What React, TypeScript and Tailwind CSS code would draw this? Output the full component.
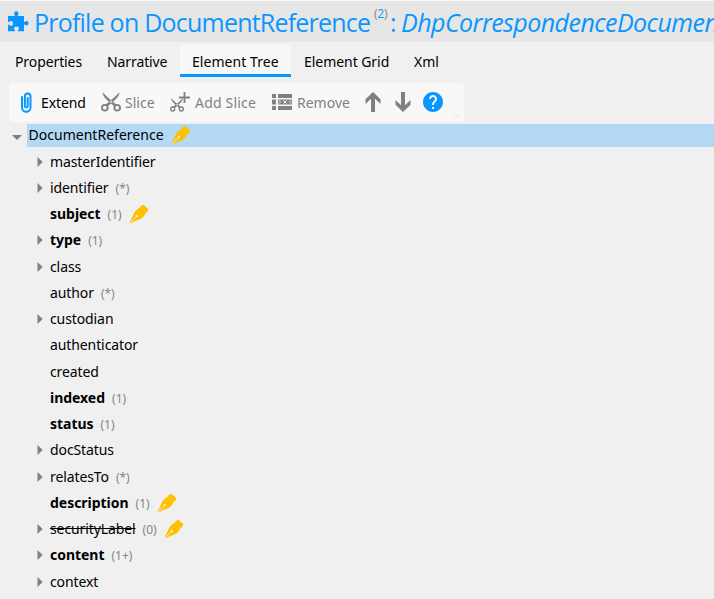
import React from "react";
import { MdHelp } from "react-icons/md";

type Node = {
  name: string;
  card?: string;
  bold?: boolean;
  struck?: boolean;
  arrow?: boolean;
  pen?: boolean;
};

const nodes: Node[] = [
  { name: "masterIdentifier", arrow: true },
  { name: "identifier", card: "(*)", arrow: true },
  { name: "subject", card: "(1)", bold: true, pen: true },
  { name: "type", card: "(1)", bold: true, arrow: true },
  { name: "class", arrow: true },
  { name: "author", card: "(*)" },
  { name: "custodian", arrow: true },
  { name: "authenticator" },
  { name: "created" },
  { name: "indexed", card: "(1)", bold: true },
  { name: "status", card: "(1)", bold: true },
  { name: "docStatus", arrow: true },
  { name: "relatesTo", card: "(*)", arrow: true },
  { name: "description", card: "(1)", bold: true, pen: true },
  { name: "securityLabel", card: "(0)", struck: true, arrow: true, pen: true },
  { name: "content", card: "(1+)", bold: true, arrow: true },
  { name: "context", arrow: true },
];

function Puzzle() {
  return (
    <svg className="h-[21px] w-[21px] shrink-0" viewBox="0 0 21 21" fill="#0a96ff">
      <path d="M0 5h6.800V4.200C6.200 3.600 6.200 2.900 6.200 2.300 6.200 1 7.100.3 8.300.3s2.200.7 2.200 2c0 .7-.1 1.300-.7 1.900V5H16v6h.8c.5-.7 1.100-1 1.800-1 1.200 0 1.900 1 1.900 2.200s-.7 2.300-1.900 2.300c-.7 0-1.300-.4-1.800-1H16V20.300H10v-1.200c.7-.5 1-1.100 1-1.700 0-1.200-1.100-1.900-2.500-1.900S6 16.200 6 17.400c0 .7.3 1.200 1 1.700v1.200H0v-6.500h1.200c.5.8 1.100 1.100 1.800 1.100 1.300 0 2-1.100 2-2.500S4.300 9.900 3 9.900c-.7 0-1.300.3-1.800 1H0Z" />
    </svg>
  );
}

function Clip() {
  return (
    <svg className="-mt-px h-[21px] w-[11px] shrink-0" viewBox="0 0 11 21" fill="none" stroke="#0a96ff" strokeWidth="2" strokeLinecap="round">
      <path d="M1 5v10.500a4.250 4.250 0 0 0 8.500 0V4.200a2.800 2.800 0 0 0-5.600 0v9.800a1.400 1.400 0 0 0 2.800 0V6" />
    </svg>
  );
}

function Scissors({ className }: { className: string }) {
  return (
    <svg className={className} viewBox="0 0 21 20" fill="none" stroke="#808080" strokeWidth="2">
      <circle cx="4" cy="16" r="3" />
      <circle cx="17" cy="16" r="3" />
      <path d="M2 .2C2.200 3.200 4 5.700 9.300 10.200l5.100 4.600 1.600-2C12 9.400 6 5 2 .2ZM19 .2c-.2 3-2 5.500-7.300 10l-5.100 4.600L5 12.800C9 9.400 15 5 19 .2Z" fill="#808080" stroke="#808080" strokeWidth=".5" />
    </svg>
  );
}

function AddSlice() {
  return (
    <div className="relative -mt-px h-5 w-5 shrink-0">
      <Scissors className="absolute top-[6px] left-0 h-[14px] w-[14px]" />
      <svg className="absolute top-0 left-[9px] h-[11px] w-[11px]" viewBox="0 0 11 11" stroke="#808080" strokeWidth="1.800">
        <path d="M5.500 0v11M0 5.500h11" />
      </svg>
    </div>
  );
}

function RemoveRows() {
  return (
    <svg className="-mt-px h-4 w-5 shrink-0" viewBox="0 0 20 16" fill="#808080">
      <path d="M0 0h4v4H0zM6 0h14v4H6zM0 5.500h4v5H0zM6 5.500h14v5H6zM0 12h4v4H0zM6 12h14v4H6z" />
      <path d="m7 6.500 1.500 1.500L7 9.500M11.500 6.500l3 3m0-3-3 3M19 6.500 17.500 8l1.500 1.500" fill="none" stroke="#f8f8f8" strokeWidth="1" />
    </svg>
  );
}

function Arrow({ down = false }: { down?: boolean }) {
  return (
    <svg className={down ? "h-5 w-4 shrink-0 rotate-180" : "h-5 w-4 shrink-0"} viewBox="0 0 16 20" fill="#808080">
      <path d="M8 0l7.500 7.200v4.800L10 6.700V20H6V6.700L.5 12V7.200Z" />
    </svg>
  );
}

function Pen() {
  return (
    <svg className="h-5 w-5 shrink-0" viewBox="0 0 20 20">
      <path d="M10.800 2.700 14.400.8 19.400 5.200 17.400 9.200Z" fill="#ffc000" />
      <path d="M11.600 3.200 16.700 8.300C15.500 12.600 12.400 15.600 7.600 16.400L1.300 19.300.6 18.600 3.400 12.700C4.700 8.300 7.400 5.100 11.600 3.200Z" fill="#ffc000" />
      <path d="M1 18.900 7.300 12.600" stroke="#f4eedc" strokeWidth=".9" />
      <circle cx="7.800" cy="12" r="1.200" fill="#f4eedc" />
    </svg>
  );
}

function TreeRow({ node }: { node: Node }) {
  return (
    <div className="flex h-[26.250px] items-center pl-[37px]">
      <div className="w-[13px] shrink-0">
        {node.arrow && (
          <svg className="h-[10px] w-[6px]" viewBox="0 0 6 10">
            <path d="M.5 0 5.700 5 .5 10Z" fill="#808080" />
          </svg>
        )}
      </div>
      <span className={`${node.bold ? "font-bold tracking-[-0.030px]" : "tracking-[-0.1px]"} ${node.struck ? "line-through" : ""}`}>{node.name}</span>
      {node.card && <span className="ml-[7px] pt-[2px] text-[12px] text-[#858585]">{node.card}</span>}
      {node.pen && <span className="ml-[7px]"><Pen /></span>}
    </div>
  );
}

export default function App() {
  return (
    <div className="h-[599px] w-[714px] overflow-hidden bg-[#f0f0f0] font-['Noto_Sans','Open_Sans',sans-serif] text-[14px] leading-5 text-black">
      <header className="flex h-[42px] items-center border-t border-[#f8f8f8] bg-[#e6e6e6] pl-2 whitespace-nowrap text-[#0a96ff]">
        <Puzzle />
        <h1 className="ml-[5px] flex items-center font-['Open_Sans',sans-serif] text-[25px] leading-8">
          <span className="w-[337px] tracking-[-0.780px]">Profile on DocumentReference</span>
          <span className="mb-[16px] ml-[3px] w-[16px] text-[12px] leading-4 tracking-[-0.2px]"><span className="text-[#858585]">(</span>2<span className="text-[#858585]">)</span></span>
          <span className="w-[11px]">:</span>
          <span className="tracking-[-0.550px] italic">DhpCorrespondenceDocumen</span>
        </h1>
      </header>
      <nav className="mt-[2px] flex h-[33px] text-[14px]">
        <div className="w-[107px] pt-2 pl-[15px] tracking-[-0.1px]">Properties</div>
        <div className="w-[73px] pt-2 tracking-[-0.1px]">Narrative</div>
        <div className="w-[111px] rounded-t-[6px] border-b-[3px] border-[#0a96ff] bg-[#f8f8f8] pt-2 pl-3 tracking-[0.050px]">Element Tree</div>
        <div className="w-[123px] pt-2 pl-[13px] tracking-[-0.050px]">Element Grid</div>
        <div className="pt-2">Xml</div>
      </nav>
      <div className="mt-[6px] ml-[9px] flex h-[39px] w-[455px] items-center rounded-[4px] bg-[#f8f8f8] pl-3 whitespace-nowrap text-[#808080]">
        <div className="flex w-[80px] items-center gap-[9px] text-black"><Clip /><span className="tracking-[-0.1px]">Extend</span></div>
        <div className="flex w-[69px] items-center gap-[4px]"><Scissors className="-mt-px h-5 w-5 shrink-0" /><span>Slice</span></div>
        <div className="flex w-[102px] items-center gap-[5px]"><AddSlice /><span className="tracking-[0.2px]">Add Slice</span></div>
        <div className="flex w-[93px] items-center gap-[5px]"><RemoveRows /><span>Remove</span></div>
        <span className="-mt-px flex"><Arrow /></span>
        <span className="-mt-px ml-[14px] flex"><Arrow down /></span>
        <MdHelp className="-mt-px ml-[10px] h-6 w-6 shrink-0 text-[#0a96ff]" />
        <svg className="mt-[22px] ml-[8px] h-2 w-2" viewBox="0 0 8 8" fill="#eeeeee"><path d="M0 0h7v1H0zM0 4h7L3.500 7.500Z" /></svg>
      </div>
      <div className="mt-[2px] flex h-[23px] items-center">
        <svg className="mt-[3px] ml-3 h-[5px] w-[10px] shrink-0" viewBox="0 0 10 5"><path d="M0 0h10L5 5Z" fill="#808080" /></svg>
        <div className="ml-[5px] flex h-[23px] flex-1 items-center border-y border-[#a9d8f4] bg-[#b4d9f4] pb-[2px] pl-[1.500px]">
          <span className="tracking-[0.020px]">DocumentReference</span>
          <span className="ml-[7px] pt-px"><Pen /></span>
        </div>
      </div>
      <main className="pt-[1.600px]">
        {nodes.map((node) => <TreeRow key={node.name} node={node} />)}
      </main>
    </div>
  );
}
